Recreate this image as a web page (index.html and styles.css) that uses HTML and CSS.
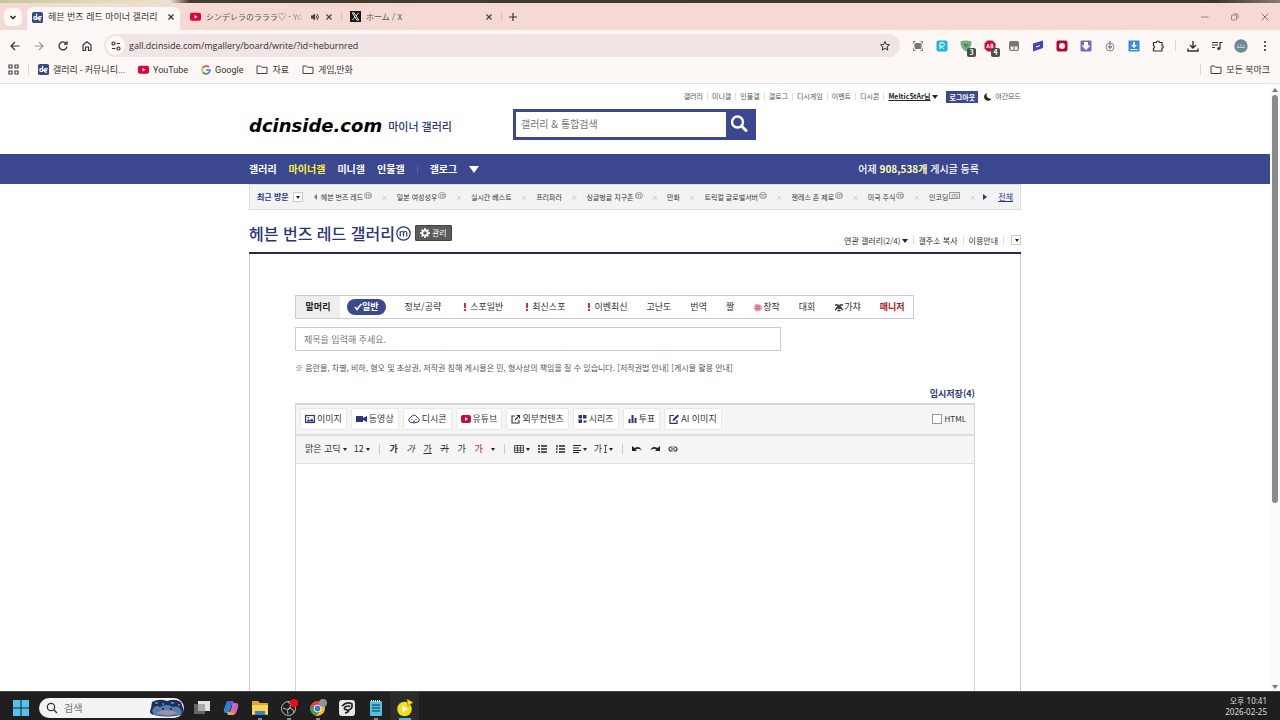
FILE: index.html
```html
<!DOCTYPE html>
<html lang="ko">
<head>
    <meta charset="UTF-8">
    <meta name="viewport" content="width=device-width, initial-scale=1.0">
    <title>헤븐 번즈 레드 마이너 갤러리</title>
    <link rel="stylesheet" href="styles.css">
</head>
<body>
    <div class="backdrop"></div>

    <!-- Browser tabs -->
    <div class="tabs">
        <button class="tab-list" aria-label="탭 검색"><svg width="10" height="10" viewBox="0 0 10 10"><path d="M2.5 4 5 6.500 7.500 4" fill="none" stroke="#222" stroke-width="1.500"/></svg></button>
        <div class="tab active">
            <svg width="11" height="11" viewBox="0 0 12 12"><rect width="12" height="12" rx="2" fill="#3b4890"/><path d="M5 2v6H3.200Q2 8 2 6.500T3.200 5H5M10.500 5H8.500Q7 5 7 6.800T8.500 9h1M5 7h5" fill="none" stroke="#fff" stroke-width="1.400"/></svg>
            <span class="tab-title">헤븐 번즈 레드 마이너 갤러리</span>
            <button class="close" aria-label="닫기"><svg width="8" height="8" viewBox="0 0 8 8"><path d="m1.500 1.500 5 5m0-5-5 5" stroke="#333" stroke-width="1.300"/></svg></button>
        </div>
        <div class="tab">
            <svg width="11" height="11" viewBox="0 0 12 12"><rect y="2" width="12" height="8.500" rx="2" fill="#e4003c"/><path d="m5 4.300 3.200 2L5 8.300z" fill="#fff"/></svg>
            <span class="tab-title jp fade">シンデレラのラララ♡ - Yo</span>
            <svg width="10" height="10" viewBox="0 0 10 10"><path d="M1 3.500h1.500L5 1.500v7l-2.500-2H1z" fill="#444"/><path d="M6 3.500q1.300 1.500 0 3M7 2q3 3 0 6" fill="none" stroke="#444"/></svg>
            <button class="close" aria-label="닫기"><svg width="8" height="8" viewBox="0 0 8 8"><path d="m1.500 1.500 5 5m0-5-5 5" stroke="#444" stroke-width="1.200"/></svg></button>
        </div>
        <i class="tab-sep"></i>
        <div class="tab">
            <svg width="11" height="11" viewBox="0 0 12 12"><rect width="12" height="12" fill="#151515"/><path d="M2.500 2h2l5 8h-2zM9.500 2 6.600 5.400M5.400 6.700 2.500 10" fill="none" stroke="#fff"/></svg>
            <span class="tab-title jp">ホーム / X</span>
            <button class="close" aria-label="닫기"><svg width="8" height="8" viewBox="0 0 8 8"><path d="m1.500 1.500 5 5m0-5-5 5" stroke="#444" stroke-width="1.200"/></svg></button>
        </div>
        <i class="tab-sep"></i>
        <button class="new-tab" aria-label="새 탭"><svg width="10" height="10" viewBox="0 0 10 10"><path d="M5 1v8M1 5h8" stroke="#333" stroke-width="1.200"/></svg></button>
        <div class="window-buttons">
            <button aria-label="최소화"><svg width="8" height="8" viewBox="0 0 8 8"><path d="M0 4h7.500" stroke="#998482"/></svg></button>
            <button aria-label="이전 크기"><svg width="8" height="8" viewBox="0 0 8 8"><g fill="none" stroke="#998482"><rect x=".5" y="2" width="5" height="5" rx="1"/><path d="M2.500 1H6q1 0 1 1v3.500"/></g></svg></button>
            <button aria-label="닫기"><svg width="8" height="8" viewBox="0 0 8 8"><path d="m.5.5 7 7m0-7-7 7" stroke="#887674"/></svg></button>
        </div>
    </div>

    <!-- Address bar -->
    <div class="toolbar">
        <button aria-label="뒤로"><svg width="12" height="12" viewBox="0 0 12 12"><path d="M10.500 6h-8M6 2 2 6l4 4" fill="none" stroke="#333" stroke-width="1.200"/></svg></button>
        <button aria-label="앞으로"><svg width="12" height="12" viewBox="0 0 12 12"><path d="M1.500 6h8M6 2l4 4-4 4" fill="none" stroke="#999" stroke-width="1.100"/></svg></button>
        <button aria-label="새로고침"><svg width="12" height="12" viewBox="0 0 12 12"><path d="M10 6.500A4 4 0 1 1 9 3.200M10 1.200v3H7" fill="none" stroke="#333" stroke-width="1.300"/></svg></button>
        <button aria-label="홈"><svg width="12" height="12" viewBox="0 0 12 12"><path d="M2 5 6 1.700 10 5v5.500H7.500V7h-3v3.500H2z" fill="none" stroke="#333" stroke-width="1.200"/></svg></button>
        <div class="address">
            <span class="site-info"><svg width="12" height="12" viewBox="0 0 12 12"><g fill="none" stroke="#333" stroke-width="1.200"><circle cx="3.500" cy="3.500" r="1.500"/><path d="M6.500 3.500H10M2 8.500h3.500"/><circle cx="8.500" cy="8.500" r="1.500"/></g></svg></span>
            <input type="text" aria-label="주소" value="gall.dcinside.com/mgallery/board/write/?id=heburnred">
            <button aria-label="북마크"><svg width="12" height="12" viewBox="0 0 12 12"><path d="m6 1.500 1.300 3 3.200.3-2.400 2.100.7 3.200L6 8.400l-2.800 1.700.7-3.200-2.400-2.100 3.200-.3z" fill="none" stroke="#333"/></svg></button>
        </div>
        <div class="extensions">
            <span><svg width="12" height="12" viewBox="0 0 12 12"><path d="M3.500 1.500h-2v2M8.500 1.500h2v2M3.500 10.500h-2v-2M8.500 10.500h2v-2" fill="none" stroke="#777"/><rect x="2.500" y="3" width="7" height="6" rx="1" fill="#777"/></svg></span>
            <span><svg width="12" height="12" viewBox="0 0 12 12"><rect x=".5" y=".5" width="11" height="11" rx="2" fill="#21b1dc"/><path d="M4 9.500V2.700h2.500q2 0 2 1.800T6.500 6.300H4.500L8.500 9.500" fill="none" stroke="#fff"/></svg></span>
            <span><svg width="12" height="12" viewBox="0 0 12 12"><path d="M.5 1.500Q6-.5 11.500 1.500 12 8 6 11.500 0 8 .5 1.500" fill="#6fb27b"/><path d="M3 4h6L6 8z" fill="#4b8d59"/></svg><b class="badge">3</b></span>
            <span><svg width="12" height="12" viewBox="0 0 12 12"><path d="M3.500.5h5l3 3v5l-3 3h-5l-3-3v-5z" fill="#c90d3e"/><path d="M2.500 8 4 4l1.500 4M3 7h2M7 4v4h2V6H7h1.500V4z" fill="none" stroke="#fff" stroke-width=".8"/></svg><b class="badge">4</b></span>
            <span><svg width="12" height="12" viewBox="0 0 12 12"><rect x="1" y="1" width="10" height="10" rx="2" fill="#777"/><path d="M2.500 6.500h3V10h-3zM6.500 6.500h3V10h-3z" fill="#f3eeec"/></svg></span>
            <span><svg width="12" height="12" viewBox="0 0 12 12"><path d="M1 3.500 11 .5v7.500L1 11.500z" fill="#4343c7"/><path d="m4 7 4-1.500" stroke="#fff"/></svg></span>
            <span><svg width="12" height="12" viewBox="0 0 12 12"><rect x=".5" y=".5" width="11" height="11" rx="2" fill="#b50837"/><circle cx="6" cy="6" r="3" fill="#fff2ef"/></svg></span>
            <span><svg width="12" height="12" viewBox="0 0 12 12"><rect x=".5" y=".5" width="11" height="11" rx="1" fill="#7c69bb"/><path d="M4 2h4v3.500h2.500L6 10 1.500 5.500H4z" fill="#fff"/></svg></span>
            <span><svg width="12" height="12" viewBox="0 0 12 12"><g fill="none" stroke="#888"><circle cx="6" cy="7" r="4"/><path d="M6 1v7M4 6l2 2.500L8 6" stroke-width="1.300"/></g></svg></span>
            <span><svg width="12" height="12" viewBox="0 0 12 12"><rect x=".5" y=".5" width="11" height="11" fill="#2f91dc"/><path d="M5 2h2v3h2L6 8 3 5h2zM2.500 9h7v1h-7z" fill="#fff"/></svg></span>
            <button aria-label="확장 프로그램"><svg width="12" height="12" viewBox="0 0 12 12"><path d="M1.500 2.500h3a1.500 1.500 0 0 1 3 0H10v3a1.300 1.300 0 0 1 0 2.600V11H1.500V8.500q2-1.600 0-3z" fill="none" stroke="#333" stroke-width="1.200"/></svg></button>
            <i class="bar-sep"></i>
            <button aria-label="다운로드"><svg width="12" height="12" viewBox="0 0 12 12"><path d="M6 1v6.500M3 5l3 3 3-3M1 8.500V11h10V8.500" fill="none" stroke="#333" stroke-width="1.400"/></svg></button>
            <button aria-label="미디어"><svg width="12" height="12" viewBox="0 0 12 12"><path d="M1 2.500h6M1 5h6M1 7.500h3M9 8.500V2.500h2.500" fill="none" stroke="#333" stroke-width="1.200"/><circle cx="7.800" cy="8.500" r="1.500" fill="#333"/></svg></button>
            <button aria-label="프로필"><svg width="14" height="14" viewBox="0 0 14 14"><circle cx="7" cy="7" r="6.700" fill="#6e8b93"/><path d="M3 8.500h8M4 6v2M7 5v3M10 6v2" stroke="#b9c9cd"/></svg></button>
            <button aria-label="메뉴"><svg width="12" height="12" viewBox="0 0 12 12"><g fill="#333"><circle cx="6" cy="2" r="1.100"/><circle cx="6" cy="6" r="1.100"/><circle cx="6" cy="10" r="1.100"/></g></svg></button>
        </div>
    </div>

    <!-- Bookmarks -->
    <div class="bookmarks">
        <svg width="11" height="11" viewBox="0 0 11 11"><path d="M1 1h3v3H1zM7 1h3v3H7zM1 7h3v3H1zM7 7h3v3H7z" fill="none" stroke="#444" stroke-width="1.200"/></svg>
        <i class="bar-sep"></i>
        <a href="#"><svg width="11" height="11" viewBox="0 0 12 12"><rect width="12" height="12" rx="2" fill="#3b4890"/><path d="M5 2v6H3.200Q2 8 2 6.500T3.200 5H5M10.500 5H8.500Q7 5 7 6.800T8.500 9h1M5 7h5" fill="none" stroke="#fff" stroke-width="1.400"/></svg>갤러리 - 커뮤니티...</a>
        <a href="#"><svg width="11" height="11" viewBox="0 0 12 12"><rect y="2" width="12" height="8.500" rx="2" fill="#e4003c"/><path d="m5 4.300 3.200 2L5 8.300z" fill="#fff"/></svg>YouTube</a>
        <a href="#"><svg width="10" height="10" viewBox="0 0 10 10"><g fill="none" stroke-width="1.700"><path d="M8 2.200A4 4 0 0 0 1.800 2.800" stroke="#ea4335"/><path d="M1.800 2.800a4 4 0 0 0 0 4.400" stroke="#fbbc05"/><path d="M1.800 7.200A4 4 0 0 0 7.500 8" stroke="#34a853"/><path d="M7.500 8Q9 6.800 9 5H5" stroke="#4285f4"/></g></svg>Google</a>
        <a href="#"><svg width="12" height="11" viewBox="0 0 12 11"><path d="M1 2h3.500l1.200 1.300H11V9.500H1z" fill="none" stroke="#444"/></svg>자료</a>
        <a href="#"><svg width="12" height="11" viewBox="0 0 12 11"><path d="M1 2h3.500l1.200 1.300H11V9.500H1z" fill="none" stroke="#444"/></svg>게임,만화</a>
        <i class="bar-sep push"></i>
        <a href="#" class="all"><svg width="12" height="11" viewBox="0 0 12 11"><path d="M1 2h3.500l1.200 1.300H11V9.500H1z" fill="none" stroke="#444"/></svg>모든 북마크</a>
    </div>

    <div class="viewport">
        <div class="page">
            <header class="wrap">
                <nav class="util">
                    <a href="#">갤러리</a><a href="#">미니갤</a><a href="#">인물갤</a><a href="#">갤로그</a><a href="#">디시게임</a><a href="#">이벤트</a><a href="#">디시콘</a>
                    <a href="#" class="user"><u>MelticStAr님</u><i class="caret"></i></a>
                    <button class="logout">로그아웃</button>
                    <a href="#" class="night"><svg width="8" height="8" viewBox="0 0 8 8"><path d="M3 0Q1 5 7.500 6A4 4 0 1 1 3 0" fill="#222"/></svg>야간모드</a>
                </nav>
                <div class="head">
                    <a href="#" class="logo">dcinside.com</a>
                    <a href="#" class="minor">마이너 갤러리</a>
                    <form class="search">
                        <input type="text" placeholder="갤러리 &amp; 통합검색" aria-label="갤러리 &amp; 통합검색">
                        <button type="button" aria-label="검색"><svg width="20" height="20" viewBox="0 0 20 20"><circle cx="8.500" cy="8" r="5.500" fill="none" stroke="#fff" stroke-width="2.400"/><path d="m12.500 12 4.500 4.500" stroke="#fff" stroke-width="3" stroke-linecap="round"/></svg></button>
                    </form>
                </div>
            </header>

            <nav class="gnb">
                <div class="wrap">
                    <a href="#">갤러리</a>
                    <a href="#" class="on">마이너갤</a>
                    <a href="#">미니갤</a>
                    <a href="#">인물갤</a>
                    <i class="gnb-sep"></i>
                    <a href="#">갤로그</a>
                    <i class="caret big"></i>
                    <p class="count">어제 <b>908,538개</b> 게시글 등록</p>
                </div>
            </nav>

            <div class="recent wrap">
                <b>최근 방문</b>
                <button class="drop" aria-label="최근 방문 열기"><i class="caret"></i></button>
                <i class="arrow left"></i>
                <ul>
                    <li><a href="#">헤븐 번즈 레드<i class="m">m</i></a></li><li class="x">×</li>
                    <li><a href="#">일본 여성성우<i class="m">m</i></a></li><li class="x">×</li>
                    <li><a href="#">실시간 베스트</a></li><li class="x">×</li>
                    <li><a href="#">프리파라</a></li><li class="x">×</li>
                    <li><a href="#">싱글벙글 지구촌<i class="m">m</i></a></li><li class="x">×</li>
                    <li><a href="#">만화</a></li><li class="x">×</li>
                    <li><a href="#">트릭컬 글로벌서버<i class="m">m</i></a></li><li class="x">×</li>
                    <li><a href="#">젠레스 존 제로<i class="m">m</i></a></li><li class="x">×</li>
                    <li><a href="#">미국 주식<i class="m">m</i></a></li><li class="x">×</li>
                    <li><a href="#">인코딩<i class="m mi">mi</i></a></li><li class="x">×</li>
                </ul>
                <i class="arrow right"></i>
                <a href="#" class="all">전체</a>
            </div>

            <main class="wrap">
                <div class="gall-head">
                    <h1>헤븐 번즈 레드 갤러리</h1>
                    <svg width="15" height="15" viewBox="0 0 15 15"><circle cx="7.500" cy="7.500" r="6.700" fill="none" stroke="#29367c" stroke-width="1.200"/><path d="M4.200 10.500V5.500M4.200 7.500Q4.200 5.500 5.900 5.500T7.500 7.500v3M7.500 7.500Q7.500 5.500 9.200 5.500t1.600 2v3" fill="none" stroke="#29367c" stroke-width="1.200"/></svg>
                    <button class="manage"><svg width="10" height="10" viewBox="0 0 10 10"><circle cx="5" cy="5" r="2.700" fill="none" stroke="#fff" stroke-width="1.800"/><path d="M5 0v2M5 8v2M0 5h2M8 5h2M1.500 1.500 3 3M7 7l1.500 1.500M8.500 1.500 7 3M3 7 1.500 8.500" stroke="#fff" stroke-width="1.500"/></svg>관리</button>
                    <div class="links">
                        <a href="#">연관 갤러리(2/4)<i class="caret"></i></a>
                        <a href="#">갤주소 복사</a>
                        <a href="#">이용안내</a>
                        <button class="drop" aria-label="더보기"><i class="caret"></i></button>
                    </div>
                </div>

                <form class="write">
                    <div class="subjects">
                        <b class="label">말머리</b>
                        <div class="subject-list">
                            <button type="button" class="on"><svg width="8" height="8" viewBox="0 0 8 8"><path d="m1 4 2 2.500L7.300 1" fill="none" stroke="#fff" stroke-width="1.500"/></svg>일반</button>
                            <button type="button">정보/공략</button>
                            <button type="button"><i class="bang"></i>스포일반</button>
                            <button type="button"><i class="bang"></i>최신스포</button>
                            <button type="button"><i class="bang"></i>이벤최신</button>
                            <button type="button">고난도</button>
                            <button type="button">번역</button>
                            <button type="button">짤</button>
                            <button type="button"><svg width="10" height="9" viewBox="0 0 10 9"><path d="M1 4Q2 0 5.500 1T9 5 5 8.500 1 4" fill="#e8a0aa"/><path d="m3 3 4 1M2.500 5.500 7 6" stroke="#c0566a"/></svg>창작</button>
                            <button type="button">대회</button>
                            <button type="button"><svg width="10" height="9" viewBox="0 0 10 9"><path d="M1 2h3M6 2h3M1 7l3-3M9 7 5.500 4M2 5h6M3.500 7.500h3" stroke="#333" stroke-width="1.300"/><circle cx="5" cy="3.500" r="2" fill="#444"/></svg>가챠</button>
                            <button type="button" class="manager">매니저</button>
                        </div>
                    </div>
                    <input class="subject" type="text" placeholder="제목을 입력해 주세요." aria-label="제목">
                    <p class="notice">※ 음란물, 차별, 비하, 혐오 및 초상권, 저작권 침해 게시물은 민, 형사상의 책임을 질 수 있습니다. <a href="#">[저작권법 안내]</a> <a href="#">[게시물 활용 안내]</a></p>
                    <a href="#" class="saved">임시저장(4)</a>

                    <div class="editor">
                        <div class="attach">
                            <button type="button"><svg width="10" height="10" viewBox="0 0 10 10"><rect x=".6" y="1.500" width="8.800" height="7" fill="none" stroke="#29367c" stroke-width="1.200"/><path d="m1.500 7.500 2-2.500L5 6.500 7 4.500l2 3z" fill="#29367c"/><circle cx="3.200" cy="3.500" r=".8" fill="#29367c"/></svg>이미지</button>
                            <button type="button"><svg width="11" height="10" viewBox="0 0 11 10"><path d="M0 2h7v2l4-2v6L7 6v2H0z" fill="#29367c"/></svg>동영상</button>
                            <button type="button"><svg width="12" height="10" viewBox="0 0 12 10"><path d="M3 3q3-4 6 0 4 3 1 5-4 2-8 0-3-2 1-5z" fill="none" stroke="#29367c"/><path d="M3.500 5.500h1M7.500 5.500h1M5 7.200h2" stroke="#29367c"/></svg>디시콘</button>
                            <button type="button"><svg width="10" height="10" viewBox="0 0 10 10"><rect y="1" width="10" height="8" rx="2" fill="#c30d37"/><path d="m4 3 3 2-3 2z" fill="#fff"/></svg>유튜브</button>
                            <button type="button"><svg width="9" height="10" viewBox="0 0 9 10"><path d="M4 2H1v7h7V6M5.500 1.500h3v3M8.500 1.500 4 6" fill="none" stroke="#333" stroke-width="1.100"/></svg>외부컨텐츠</button>
                            <button type="button"><svg width="9" height="10" viewBox="0 0 9 10"><path d="M.5 1h3.500v3.500H.5zM5 1h3.500v3.500H5zM.5 5.500h3.500V9H.5zM5.500 6.500h3v2h-3z" fill="#29367c"/></svg>시리즈</button>
                            <button type="button"><svg width="9" height="10" viewBox="0 0 9 10"><path d="M.5 5h2v4h-2zM3.500 1h2v8h-2zM6.500 4h2v5h-2z" fill="#29367c"/></svg>투표</button>
                            <button type="button"><svg width="10" height="10" viewBox="0 0 10 10"><path d="M5 1.500H1v7.800h7V6" fill="none" stroke="#29367c" stroke-width="1.200"/><path d="M3.500 7 4 5l4.500-4.500L10 2 5.500 6.500z" fill="#29367c"/></svg>AI 이미지</button>
                            <label class="html"><input type="checkbox">HTML</label>
                        </div>
                        <div class="format">
                            <button type="button">맑은 고딕<i class="caret small"></i></button>
                            <button type="button">12<i class="caret small"></i></button>
                            <i class="fsep"></i>
                            <button type="button" class="g"><b>가</b></button>
                            <button type="button" class="g"><em>가</em></button>
                            <button type="button" class="g"><u>가</u></button>
                            <button type="button" class="g"><s>가</s></button>
                            <button type="button" class="g">가</button>
                            <button type="button" class="g red">가</button>
                            <button type="button" aria-label="글자색"><i class="caret small"></i></button>
                            <i class="fsep"></i>
                            <button type="button" aria-label="표"><svg width="10" height="8" viewBox="0 0 10 8"><path d="M.5.5h9v7h-9zM.5 3h9M.5 5.300h9M3.500.5v7M6.500.5v7" fill="none" stroke="#444" stroke-width=".9"/></svg><i class="caret small"></i></button>
                            <button type="button" class="icon" aria-label="글머리 기호"><svg width="9" height="8" viewBox="0 0 9 8"><path d="M0 1h2M0 4h2M0 7h2M3 1h6M3 4h6M3 7h6" stroke="#222" stroke-width="1.300"/></svg></button>
                            <button type="button" class="icon" aria-label="번호 매기기"><svg width="9" height="8" viewBox="0 0 9 8"><path d="M1 0v2.500M0 4h1.500M0 7h1.500M3 1h6M3 4h6M3 7h6" stroke="#222" stroke-width="1.300"/></svg></button>
                            <button type="button" aria-label="정렬"><svg width="8" height="8" viewBox="0 0 8 8"><path d="M0 .5h8M0 3h6M0 5.500h8M0 7.500h6" stroke="#222"/></svg><i class="caret small"></i></button>
                            <button type="button" aria-label="줄 간격">가<svg width="3" height="8" viewBox="0 0 3 8"><path d="M0 .5h3M1.500 0v8M0 7.500h3" stroke="#333" stroke-width=".8"/></svg><i class="caret small"></i></button>
                            <i class="fsep"></i>
                            <button type="button" class="icon" aria-label="실행 취소"><svg width="10" height="8" viewBox="0 0 10 8"><path d="M0 1v5h5L3.500 4.500Q7 2.500 9.500 5.500 8 0 2.500 3z" fill="#222"/></svg></button>
                            <button type="button" class="icon" aria-label="다시 실행"><svg width="10" height="8" viewBox="0 0 10 8"><path d="M10 1v5H5l1.500-1.500Q3 2.500.5 5.500 2 0 7.500 3z" fill="#222"/></svg></button>
                            <button type="button" class="icon" aria-label="링크"><svg width="10" height="8" viewBox="0 0 10 8"><path d="M4.500 2H3a2 2 0 0 0 0 4h1.500M5.500 2H7a2 2 0 0 1 0 4H5.500M3 4h4" fill="none" stroke="#333" stroke-width="1.100"/></svg></button>
                        </div>
                        <textarea aria-label="본문"></textarea>
                    </div>
                </form>
            </main>
        </div>
        <div class="scrollbar"><i class="caret up"></i><div class="thumb"></div><i class="caret down"></i></div>
    </div>

    <!-- Taskbar -->
    <footer class="taskbar">
        <button class="start" aria-label="시작"><svg width="16" height="16" viewBox="0 0 16 16"><path d="M0 0h7.500v7.500H0zM8.500 0H16v7.500H8.500zM0 8.500h7.500V16H0zM8.500 8.500H16V16H8.500z" fill="#52c3ef"/></svg></button>
        <div class="task-search">
            <svg width="12" height="12" viewBox="0 0 12 12"><circle cx="5" cy="5" r="3.700" fill="none" stroke="#333" stroke-width="1.200"/><path d="m7.700 7.700 3.300 3.300" stroke="#333" stroke-width="1.300"/></svg>
            <input type="text" placeholder="검색" aria-label="검색">
            <svg width="34" height="18" viewBox="0 0 34 18"><path d="M2 3Q9-1 17 2q8-3 14 1l2 6q2 6-3 7-13 3-26 0-6-1-3-7z" fill="#1f2f59"/><path d="M2 12Q5 5 10 8q7-4 13 0 6-2 9 5l-2 3q-13 2-26 0z" fill="#5a7cab"/><path d="M6 14q11-6 22 0-10 4-22 0" fill="#a08fa8"/><path d="M5 4h3M12 5h2M21 4h3M28 6h2" stroke="#55a0cf" stroke-width="1.500"/><circle cx="13" cy="10" r="1" fill="#132044"/><circle cx="21" cy="10" r="1" fill="#132044"/></svg>
        </div>
        <button class="app" aria-label="작업 보기"><svg width="18" height="18" viewBox="0 0 18 18"><path d="M1 5h11v10H1z" fill="#666"/><path d="M5 2h12v10H5z" fill="#e2e2e2"/><path d="M5 5h7v7H5z" fill="#aaa"/></svg></button>
        <button class="app" aria-label="Copilot"><svg width="18" height="18" viewBox="0 0 18 18"><path d="M5 2h6L7 14H4Q1 14 2 10z" fill="#2386d5"/><path d="M5 2h6l2 4H8z" fill="#6c5be0"/><path d="M13 4q4 0 3 4l-2 6q-1 2-3 2H6l-1-3h3l3-9z" fill="#df6a9c"/><path d="M13 4q4 0 3 4l-1 3h-4z" fill="#c65fd1"/><path d="M6 16l-1-3h5l2 3z" fill="#f0a04d"/></svg></button>
        <button class="app run" aria-label="파일 탐색기"><svg width="18" height="18" viewBox="0 0 18 18"><path d="M1 2h6l2 2h8v12H1z" fill="#e6a423"/><path d="M1 6h16v9H1z" fill="#fbd458"/><path d="M4 12h10v4H4z" fill="#2c83c9"/></svg></button>
        <button class="app run" aria-label="OBS"><svg width="18" height="18" viewBox="0 0 18 18"><g fill="none" stroke="#bbb"><circle cx="8.500" cy="9.500" r="7"/><path d="M8 3q4 2 2 6-3 3-7 0M10 9q4 1 4 5M10 9q-4 2-2 6"/></g><circle cx="14" cy="4" r="4" fill="#f10b18"/></svg></button>
        <button class="app run" aria-label="Chrome"><svg width="18" height="18" viewBox="0 0 18 18"><circle cx="8.500" cy="9.500" r="7.500" fill="#e54335"/><path d="M2 6q-3 7 5 11l4-6-7-1z" fill="#32a552"/><path d="M8.500 6.500h7q2 9-8.500 10.500l4-5z" fill="#fbc116"/><circle cx="8.500" cy="9.500" r="3.800" fill="#fff"/><circle cx="8.500" cy="9.500" r="2.900" fill="#3978df"/><circle cx="14" cy="4" r="4" fill="#85979f"/></svg></button>
        <button class="app" aria-label="클립 스튜디오"><svg width="18" height="18" viewBox="0 0 18 18"><rect x="1" y="1" width="16" height="16" rx="3" fill="#e7e7e7"/><path d="M4 7Q9 2 14 5q1 6-5 6-4-1-2-3 4-2 5 0M7 14q3 0 4-3" fill="none" stroke="#222" stroke-width="1.700"/></svg></button>
        <button class="app run" aria-label="메모장"><svg width="18" height="18" viewBox="0 0 18 18"><rect x="3" y="2" width="12" height="15" rx="1" fill="#54bfe0"/><path d="M5 6h8M5 9h8M5 12h8" stroke="#16667e" stroke-width="1.300"/><path d="M4 2h10" stroke="#d8f1f7" stroke-width="2" stroke-dasharray="1 1"/></svg></button>
        <button class="app run current" aria-label="플레이어"><svg width="18" height="18" viewBox="0 0 18 18"><circle cx="8.500" cy="10" r="7.300" fill="#f0df16"/><path d="m6.500 6.500 5.500 3.500-5.500 3.500z" fill="#fff"/><path d="m11 0 6 3.500-5 3.500z" fill="#f5e22f" stroke="#8a7d10" stroke-width=".6"/></svg></button>
        <p class="clock">오후 10:41<br>2026-02-25</p>
    </footer>
</body>
</html>
```
FILE: styles.css
```css
* {
    box-sizing: border-box;
}

body {
    margin: 0;
    height: 100vh;
    display: flex;
    flex-direction: column;
    overflow: hidden;
    font-family: "Noto Sans CJK KR", sans-serif;
    font-size: 9px;
    line-height: 12px;
    color: #333;
    background-color: #fff;
}

a {
    color: inherit;
    text-decoration: none;
}

button, input, textarea {
    font: inherit;
    color: inherit;
    margin: 0;
    padding: 0;
    border: none;
    background: none;
    outline: none;
}

button {
    display: flex;
    align-items: center;
    justify-content: center;
}

p, h1, ul {
    margin: 0;
    padding: 0;
}

svg {
    flex: none;
}

/* Browser */
.backdrop {
    flex: none;
    height: 3px;
    background: linear-gradient(to right, #c5c79c 0, #dcdfb8 110px, #e8e4cc 170px, #453b32 190px, #40362f 95%, #89796c);
}

.tabs {
    flex: none;
    height: 27px;
    padding-left: 4px;
    display: flex;
    align-items: center;
    background-color: #f5d9d5;
}

.tab-list {
    width: 18px;
    height: 18px;
    margin-right: 5px;
    border-radius: 6px;
    background-color: #fdf8f6;
}

.tab {
    width: 153px;
    height: 23px;
    padding: 0 5px;
    display: flex;
    align-items: center;
    gap: 5px;
}

.tab + .tab {
    margin-left: 5px;
}

.tab.active {
    align-self: flex-end;
    padding-bottom: 3px;
    border-radius: 6px 6px 0 0;
    background-color: #fdf8f5;
}

.tab-title {
    flex: 1;
    overflow: hidden;
    white-space: nowrap;
}

.jp {
    font-family: "Noto Sans CJK JP", sans-serif;
    font-size: 8px;
    color: #555;
}

.fade {
    mask-image: linear-gradient(to right, #000 85%, transparent);
}

.tab-sep {
    width: 1px;
    height: 10px;
    margin: 0 3px;
    background-color: #dfbfbb;
}

.new-tab {
    margin-left: 3px;
}

.window-buttons {
    margin-left: auto;
    padding-right: 11px;
    display: flex;
    gap: 22px;
}

.toolbar {
    flex: none;
    height: 31px;
    padding-left: 3px;
    display: flex;
    align-items: center;
    background-color: #fdf8f5;
}

.toolbar > button {
    width: 24px;
}

.address {
    flex: 1;
    height: 23px;
    margin-left: 5px;
    padding: 0 9px 0 2px;
    display: flex;
    align-items: center;
    gap: 4px;
    border-radius: 12px;
    background-color: #f0e4e4;
}

.site-info {
    width: 19px;
    height: 19px;
    display: flex;
    align-items: center;
    justify-content: center;
    border-radius: 50%;
    background-color: #fdf8f5;
}

.address input {
    flex: 1;
    font-family: "Open Sans", sans-serif;
    font-size: 9px;
}

.extensions {
    margin-left: 6px;
    padding-right: 3px;
    display: flex;
    align-items: center;
}

.extensions span, .extensions button {
    position: relative;
    width: 24px;
    height: 20px;
    display: flex;
    align-items: center;
    justify-content: center;
}

.badge {
    position: absolute;
    right: 2px;
    bottom: -1px;
    width: 9px;
    font-size: 7px;
    line-height: 9px;
    text-align: center;
    color: #fff;
    border-radius: 2px;
    background-color: #4c4c48;
}

.bar-sep {
    width: 1px;
    height: 11px;
    margin: 0 5px;
    background-color: #e2d6d4;
}

.bookmarks {
    flex: none;
    height: 23px;
    padding: 0 10px 5px 8px;
    display: flex;
    align-items: center;
    background-color: #fdf8f5;
    border-bottom: 1px solid #e6e0de;
    font-family: Roboto, "Noto Sans CJK KR", sans-serif;
}

.bookmarks .bar-sep {
    margin: 0 9px;
}

.bookmarks a {
    margin-right: 13px;
    display: flex;
    align-items: center;
    gap: 4px;
}

.bookmarks .push {
    margin-left: auto;
}

.bookmarks .all {
    margin-right: 0;
}

/* Page */
.viewport {
    flex: 1;
    min-height: 0;
    display: flex;
}

.page {
    flex: 1;
    display: flex;
    flex-direction: column;
    overflow: hidden;
}

.wrap {
    width: 100%;
    max-width: 772px;
    margin: 0 auto;
}

.caret {
    display: inline-block;
    border: 3px solid transparent;
    border-top: 4px solid #222;
    border-bottom: none;
}

.caret.small {
    border-width: 3px 2px 0;
}

.caret.big {
    border-width: 7px 5px 0;
    border-top-color: #fff;
}

.util {
    height: 25px;
    display: flex;
    align-items: center;
    justify-content: flex-end;
    font-size: 7px;
    color: #555;
}

.util a {
    padding: 0 4px;
    line-height: 7px;
    border-right: 1px solid #ddd;
}

.util a.user {
    padding-right: 0;
    display: flex;
    align-items: center;
    gap: 2px;
    border: none;
    font-weight: bold;
    color: #222;
}

.logout {
    margin: 0 6px 0 8px;
    padding: 0 3px;
    font-size: 7px;
    font-weight: bold;
    color: #fff;
    background-color: #3b4890;
}

.util a.night {
    padding: 0;
    display: flex;
    align-items: center;
    gap: 3px;
    border: none;
}

.head {
    height: 45px;
    padding-bottom: 15px;
    display: flex;
    align-items: center;
}

.logo {
    padding-top: 3px;
    font-family: "DejaVu Sans", sans-serif;
    font-size: 18px;
    font-weight: bold;
    font-style: italic;
    color: #000;
}

.minor {
    margin-left: 6px;
    padding-top: 3px;
    font-size: 11px;
    font-weight: 500;
    color: #29367c;
}

.search {
    width: 243px;
    height: 31px;
    margin-left: 61px;
    display: flex;
    border: 3px solid #3b4890;
}

.search input {
    flex: 1;
    padding-left: 5px;
    font-size: 10px;
}

.search button {
    width: 27px;
    background-color: #3b4890;
}

::placeholder {
    color: #777;
    opacity: 1;
}

.gnb {
    flex: none;
    background-color: #3b4890;
    color: #fff;
    font-size: 10px;
    font-weight: bold;
}

.gnb .wrap {
    height: 30px;
    display: flex;
    align-items: center;
    gap: 12px;
}

.gnb .on {
    color: #fff23f;
}

.gnb-sep {
    width: 1px;
    height: 8px;
    background-color: #5a66a5;
}

.count {
    margin-left: auto;
    padding-right: 42px;
    font-weight: 500;
}

.count b {
    color: #fdffb0;
}

.recent {
    height: 26px;
    padding: 0 7px;
    display: flex;
    align-items: center;
    font-size: 7px;
    border: 1px solid #ddd;
    background-color: #f3f3f3;
}

.recent b {
    font-size: 8px;
    color: #29367c;
}

.recent ul {
    flex: 1;
    display: flex;
    justify-content: space-between;
    list-style: none;
}

.recent .x {
    color: #bbb;
}

.drop {
    width: 10px;
    height: 10px;
    border: 1px solid #ccc;
    background-color: #fff;
}

.drop .caret {
    border-width: 3px 2px 0;
}

.recent .drop {
    margin: 0 11px 0 4px;
}

.m {
    display: inline-block;
    margin-left: 1px;
    width: 8px;
    font-size: 6px;
    line-height: 5px;
    font-style: normal;
    text-align: center;
    vertical-align: 2px;
    color: #777;
    border: 1px solid #999;
    border-radius: 4px;
}

.mi {
    width: 11px;
    border-radius: 0;
}

.arrow {
    border: 3px solid transparent;
}

.arrow.left {
    margin-right: 4px;
    border-left: none;
    border-right: 3px solid #777;
}

.arrow.right {
    margin: 0 11px 0 7px;
    border-right: none;
    border-left: 4px solid #29367c;
}

.recent .all {
    font-size: 8px;
    color: #29367c;
    text-decoration: underline;
}

main {
    flex: 1;
    display: flex;
    flex-direction: column;
}

.gall-head {
    height: 44px;
    display: flex;
    align-items: center;
    gap: 1px;
    padding-top: 4px;
    border-bottom: 2px solid #29294f;
}

.gall-head h1 {
    font-size: 16px;
    font-weight: 500;
    color: #29367c;
}

.manage {
    height: 16px;
    margin-left: 3px;
    padding: 0 4px;
    gap: 2px;
    font-size: 8px;
    color: #fff;
    border: 1px solid #444;
    border-radius: 1px;
    background-color: #5c5c5c;
}

.links {
    margin-left: auto;
    align-self: flex-end;
    padding-bottom: 7px;
    display: flex;
    align-items: center;
    font-size: 8px;
}

.links a {
    padding-right: 5px;
    margin-right: 5px;
    line-height: 9px;
    border-right: 1px solid #ddd;
}

.links .caret {
    margin-left: 1px;
    vertical-align: 1px;
}

.links .drop {
    margin-left: 2px;
}

.write {
    flex: 1;
    padding: 41px 45px 0;
    display: flex;
    flex-direction: column;
    border: 1px solid #ccc;
    border-width: 0 1px;
}

.subjects {
    width: 91%;
    height: 24px;
    display: flex;
    border: 1px solid #ccc;
}

.subjects .label {
    width: 44px;
    line-height: 22px;
    text-align: center;
    background-color: #eee;
    color: #222;
}

.subject-list {
    flex: 1;
    padding: 0 8px 0 7px;
    display: flex;
    align-items: center;
    justify-content: space-between;
}

.subject-list .on {
    height: 16px;
    padding: 0 7px;
    font-weight: bold;
    color: #fff;
    border-radius: 8px;
    background-color: #3b4890;
}

.subject-list .manager {
    font-weight: bold;
    color: #b3161b;
}

.bang {
    width: 2px;
    height: 8px;
    margin: 0 4px;
    border-bottom: 2px solid #d22a48;
    background: linear-gradient(#d22a48 5px, transparent 5px);
}

.subject {
    width: 486px;
    max-width: 100%;
    height: 24px;
    margin-top: 8px;
    padding-left: 8px;
    border: 1px solid #ccc;
}

.notice {
    margin-top: 11px;
    font-size: 8px;
    color: #555;
}

.saved {
    margin: 14px 0 3px;
    align-self: flex-end;
    font-size: 9px;
    font-weight: bold;
    color: #29367c;
}

.editor {
    flex: 1;
    display: flex;
    flex-direction: column;
    border: 1px solid #d5d5d5;
    border-top-width: 2px;
    border-bottom: none;
}

.attach {
    height: 31px;
    padding: 0 8px 1px 4px;
    display: flex;
    align-items: center;
    gap: 4px;
    background-color: #f5f5f5;
    border-bottom: 2px solid #ddd;
}

.attach button {
    height: 22px;
    padding: 0 4px;
    gap: 2px;
    border: 1px solid #e8e8e8;
    border-radius: 2px;
    background-color: #fff;
}

.html {
    margin-left: auto;
    display: flex;
    align-items: center;
    gap: 3px;
    font-size: 8px;
}

.html input {
    appearance: none;
    width: 10px;
    height: 10px;
    border: 1px solid #999;
    background-color: #fff;
}

.format {
    height: 28px;
    padding: 0 9px 1px;
    display: flex;
    align-items: center;
    gap: 7px;
    background-color: #f5f5f5;
    border-bottom: 1px solid #ddd;
}

.format button {
    gap: 2px;
}

.format .g {
    width: 10px;
}

.format .icon {
    width: 11px;
}

.red {
    color: #c30d37;
}

.fsep {
    width: 1px;
    height: 10px;
    margin: 0 2px;
    background-color: #ccc;
}

.editor textarea {
    flex: 1;
    resize: none;
}

.scrollbar {
    width: 10px;
    padding: 4px 2px 2px;
    display: flex;
    flex-direction: column;
    align-items: center;
    background-color: #fbfbfb;
}

.thumb {
    width: 6px;
    height: 408px;
    margin-top: 3px;
    border-radius: 3px;
    background-color: #8b8b8b;
}

.up {
    transform: rotate(180deg);
}

.up, .down {
    border-top-color: #777;
}

.down {
    margin-top: auto;
}

/* Taskbar */
.taskbar {
    flex: none;
    height: 29px;
    padding: 0 13px;
    display: flex;
    align-items: center;
    background-color: #1f1f1f;
    border-top: 1px solid #444;
}

.task-search {
    width: 145px;
    height: 20px;
    margin: 3px 3px 0 10px;
    padding-left: 7px;
    display: flex;
    align-items: center;
    gap: 6px;
    border-radius: 10px;
    background-color: #f3f3f3;
}

.start {
    margin-top: 3px;
}

.task-search input {
    flex: 1;
    min-width: 0;
    font-size: 10px;
}

.app {
    width: 29px;
    height: 28px;
    padding-top: 3px;
}

.run {
    background: linear-gradient(#888, #888) bottom / 4px 2px no-repeat;
}

.current {
    background: linear-gradient(#55b9dc, #55b9dc) bottom / 12px 2px no-repeat #2b2b29;
}

.clock {
    margin-left: auto;
    font-family: "Noto Sans", "Noto Sans CJK KR", sans-serif;
    font-size: 8px;
    line-height: 11px;
    text-align: right;
    color: #ddd;
}
```
